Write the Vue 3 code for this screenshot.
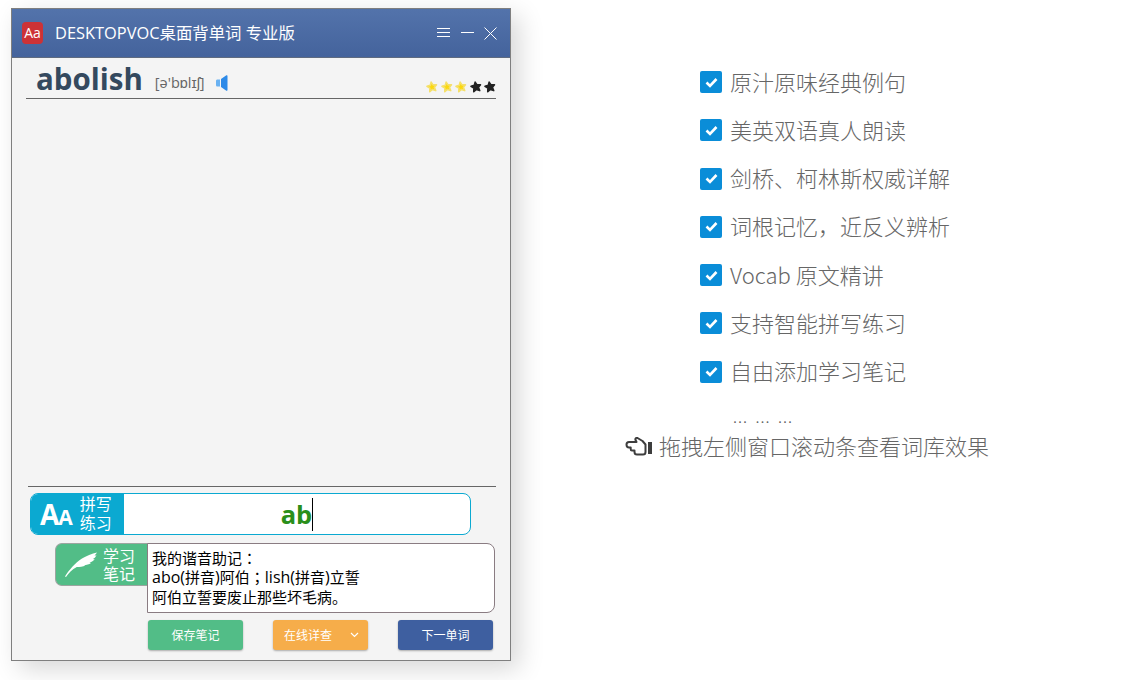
<script setup>
const features = ['原汁原味经典例句', '美英双语真人朗读', '剑桥、柯林斯权威详解', '词根记忆，近反义辨析', 'Vocab 原文精讲', '支持智能拼写练习', '自由添加学习笔记']
const stars = [true, true, true, false, false]
const starPath = 'M6 1 7.400 4.100l3.400.4-2.500 2.300.7 3.400L6 8.500l-3 1.700.7-3.400L1.200 4.500l3.400-.4z'
</script>

<template>
  <div class="page">
    <section class="window">
      <header class="titlebar">
        <div class="logo">Aa</div>
        <div class="title">DESKTOPVOC桌面背单词 专业版</div>
        <div class="controls">
          <svg width="14" height="12" viewBox="0 0 14 12"><path d="M0 1.500h13M0 5.500h13M0 9.500h13" stroke="#fff" fill="none" /></svg>
          <svg width="13" height="12" viewBox="0 0 13 12"><path d="M0 5.500h13" stroke="#fff" fill="none" /></svg>
          <svg width="13" height="13" viewBox="0 0 13 13"><path d="M.5.5l12 12M12.500.5l-12 12" stroke="#fff" fill="none" /></svg>
        </div>
      </header>
      <div class="wordhead">
        <span class="word">abolish</span>
        <span class="phon">[ə'bɒlɪʃ]</span>
        <svg class="speaker" width="12" height="16" viewBox="0 0 12 16"><path d="M0 6c0-1 .5-1.500 1.500-1.500H4v7H1.500C.5 11.500 0 11 0 10z" fill="#6ab2f2" /><path d="M5 4 10 .5c1-.6 1.500 0 1.500 1v13c0 1-.5 1.600-1.500 1L5 12z" fill="#2d8ae8" /></svg>
        <div class="stars">
          <svg v-for="(on, i) in stars" :key="i" width="12" height="12" viewBox="0 0 12 12"><path :d="starPath" transform="rotate(-10 6 6)" :fill="on ? '#fbd80e' : '#222'" :stroke="on ? '#f5e06a' : '#222'" stroke-width="1.600" stroke-linejoin="round" /></svg>
        </div>
      </div>
      <div class="body"></div>
      <div class="rule"></div>
      <div class="spell">
        <div class="tag tag-blue">
          <span class="aa"><b class="a1">A</b><b class="a2">A</b></span>
          <span class="tag-text">拼写<br />练习</span>
        </div>
        <div class="spell-input"><span class="typed">ab</span><i class="caret"></i></div>
      </div>
      <div class="note">
        <div class="tag tag-green">
          <svg class="feather" width="33" height="25" viewBox="0 0 33 25"><path d="M0 24.500C4 18 10 11 17 6.500 21 4 27 1.500 32 .5c-.5 1-1.500 2-2.500 3 .7 0 1.300 0 2-.2-.7 1.500-2 3-3.500 3.700.6.2 1.200.2 1.800.2-1.300 1.500-3 2.700-5.300 3.300.5.300 1 .4 1.500.4-1.800 1.400-4.500 2-7 2.300.4.300.8.400 1.300.5-2.500 1-5.500 1.200-8.500 1.200C7 17.500 3.500 21 1 25z" fill="#fff" /></svg>
          <span class="tag-text">学习<br />笔记</span>
        </div>
        <div class="note-text">我的谐音助记<span class="punct">：</span><br /><span class="latin">abo(</span>拼音<span class="latin">)</span>阿伯<span class="punct">；</span><span class="latin">lish(</span>拼音<span class="latin">)</span>立誓<br />阿伯立誓要废止那些坏毛病。</div>
      </div>
      <div class="actions">
        <button class="btn green">保存笔记</button>
        <button class="btn orange"><span>在线详查</span><svg width="9" height="6" viewBox="0 0 9 6"><path d="M1 1l3.500 3.500L8 1" stroke="#fff" fill="none" stroke-width="1.200" /></svg></button>
        <button class="btn blue">下一单词</button>
      </div>
    </section>

    <section class="info">
      <ul class="features">
        <li v-for="f in features" :key="f">
          <span class="check"><svg width="13" height="11" viewBox="0 0 13 11"><path d="M1.500 5.500l3.500 3.500 6.500-7" stroke="#fff" stroke-width="2.600" fill="none" /></svg></span>
          <span class="ftext">{{ f }}</span>
        </li>
      </ul>
      <div class="dots">... ... ...</div>
      <div class="hint">
        <svg class="hand" width="27" height="19" viewBox="0 0 27 19"><path d="M1.500 7.500c0-1.500 1-2.500 2.500-2.500h7.500L10.500 3c-.5-1.500.8-2.500 2-2l5 3 3 3.500V15c0 1.500-1 2.500-2.500 2.500h-6c-1.500 0-2.500-1-2.500-2.500v-1.500H7c-.8 0-1.300-.6-1.300-1.500V10.500H4c-1.500 0-2.500-1.300-2.500-3z" fill="none" stroke="#3d3d3d" stroke-width="2" stroke-linejoin="round" /><path d="M23 5h4v12h-4z" fill="#3d3d3d" /></svg>
        <span>拖拽左侧窗口滚动条查看词库效果</span>
      </div>
    </section>
  </div>
</template>

<style>
html, body { margin: 0; background: #fff; }
</style>

<style scoped>
.page {
  display: flex;
  width: 1140px;
  height: 680px;
  overflow: hidden;
  font-family: "Open Sans", "Noto Sans CJK SC", sans-serif;
}
.window {
  box-sizing: border-box;
  width: 500px;
  height: 653px;
  margin: 8px 0 0 11px;
  border: 1px solid #7f7f7f;
  background: #f4f4f4;
  box-shadow: 8px 8px 24px rgba(0, 0, 0, .16);
  display: flex;
  flex-direction: column;
  flex: none;
}
.titlebar {
  height: 49px;
  flex: none;
  box-sizing: border-box;
  display: flex;
  align-items: center;
  padding: 0 13px 0 10px;
  background: linear-gradient(#5373ab, #44639c);
  border-bottom: 1px solid #5f6b80;
  color: #fff;
}
.logo {
  width: 21px;
  height: 22px;
  border-radius: 4px;
  background: #cd3236;
  color: #fff;
  font-size: 14px;
  line-height: 22px;
  text-align: center;
  flex: none;
}
.title {
  margin-left: 12px;
  padding-bottom: 2px;
  font-size: 16.400px;
  flex: 1;
  white-space: nowrap;
}
.controls {
  display: flex;
  align-items: center;
  gap: 10px;
}
.wordhead {
  height: 41px;
  flex: none;
  box-sizing: border-box;
  margin: 0 14px;
  padding-left: 10px;
  border-bottom: 1px solid #666;
  display: flex;
  align-items: center;
}
.word {
  font-size: 29.500px;
  font-weight: 700;
  color: #34495e;
  line-height: 41px;
}
.phon {
  margin-left: 12px;
  margin-top: 9px;
  font-size: 14.500px;
  color: #666;
}
.speaker {
  margin-left: 11px;
  margin-top: 10px;
}
.stars {
  margin-left: auto;
  margin-top: 17px;
  display: flex;
  gap: 2.500px;
}
.body { flex: 1; }
.rule {
  flex: none;
  height: 1px;
  margin: 0 14px 6px 16px;
  background: #666;
}
.spell {
  flex: none;
  margin: 0 0 0 18px;
  width: 441px;
  height: 42px;
  box-sizing: border-box;
  border: 1px solid #0ba9d1;
  border-radius: 8px;
  display: flex;
  overflow: hidden;
  background: #fff;
}
.tag {
  display: flex;
  align-items: center;
  color: #fff;
  flex: none;
}
.tag-text {
  font-size: 16px;
  line-height: 19px;
  margin-left: -1px;
}
.tag-blue {
  width: 93px;
  background: #0ba9d1;
  padding-left: 9px;
  box-sizing: border-box;
  gap: 8px;
}
.aa {
  display: flex;
  align-items: baseline;
  line-height: 1;
}
.a1 { font-size: 28px; }
.a2 { font-size: 21px; margin-left: -1px; }
.spell-input {
  flex: 1;
  display: flex;
  align-items: center;
  justify-content: center;
}
.typed {
  font-size: 25.500px;
  font-weight: 700;
  color: #2a8f1a;
}
.caret {
  display: block;
  width: 1px;
  height: 33px;
  background: #000;
}
.note {
  flex: none;
  display: flex;
  align-items: flex-start;
  margin: 8px 15px 0 43px;
  height: 70px;
}
.tag-green {
  width: 93px;
  height: 43px;
  box-sizing: border-box;
  background: #52bd87;
  border: 1px solid #9ca5a0;
  border-right: 0;
  border-radius: 7px 0 0 7px;
  padding-left: 9px;
  gap: 6px;
}
.tag-green .tag-text { line-height: 18px; }
.note-text {
  flex: 1;
  height: 70px;
  box-sizing: border-box;
  background: #fff;
  border: 1px solid #8a7c82;
  border-radius: 0 8px 8px 0;
  padding: 4px 4px;
  margin-left: -1px;
  font-family: "Noto Sans CJK SC", sans-serif;
  font-size: 15px;
  line-height: 19px;
  color: #000;
  white-space: nowrap;
}
.punct { font-family: "Noto Sans CJK TC", sans-serif; }
.latin { font-family: "Open Sans", sans-serif; font-size: 16px; }
.actions {
  flex: none;
  display: flex;
  gap: 30px;
  margin: 7px 0 10px 136px;
}
.btn {
  width: 95px;
  height: 30px;
  box-sizing: border-box;
  border: 0;
  border-radius: 3px;
  padding: 0 0 2px;
  font-family: "Noto Sans CJK SC", sans-serif;
  font-size: 12px;
  color: #fff;
  box-shadow: 0 1px 2px rgba(0, 0, 0, .3);
  display: flex;
  align-items: center;
  justify-content: center;
  white-space: nowrap;
}
.green { background: #52bd87; }
.orange {
  background: #f6ad4a;
  justify-content: flex-start;
  padding-left: 11px;
  gap: 18px;
}
.orange svg { flex: none; margin-top: 2px; }
.blue { background: #3e5fa0; }
.info {
  flex: 1;
  padding-top: 66px;
  font-family: "Noto Sans CJK SC", sans-serif;
  color: #666;
  font-size: 22px;
  font-weight: 300;
}
.features {
  list-style: none;
  margin: 0 0 0 189px;
  padding: 0;
  display: flex;
  flex-direction: column;
  gap: 16.300px;
}
.features li {
  height: 32px;
  line-height: 32px;
  display: flex;
  align-items: center;
  gap: 8px;
  white-space: nowrap;
}
.ftext { padding-bottom: 3px; }
.check {
  width: 22px;
  height: 22px;
  background: #0a8dd8;
  border-radius: 2px;
  display: flex;
  align-items: center;
  justify-content: center;
  flex: none;
}
.dots {
  margin: 18px 0 0 222px;
  font-size: 16px;
  line-height: 20px;
  letter-spacing: 1px;
  word-spacing: 3px;
}
.hint {
  margin: 3px 0 0 114px;
  display: flex;
  align-items: center;
  gap: 7px;
  white-space: nowrap;
  line-height: 32px;
}
.hand { margin-top: 4px; flex: none; }
</style>
